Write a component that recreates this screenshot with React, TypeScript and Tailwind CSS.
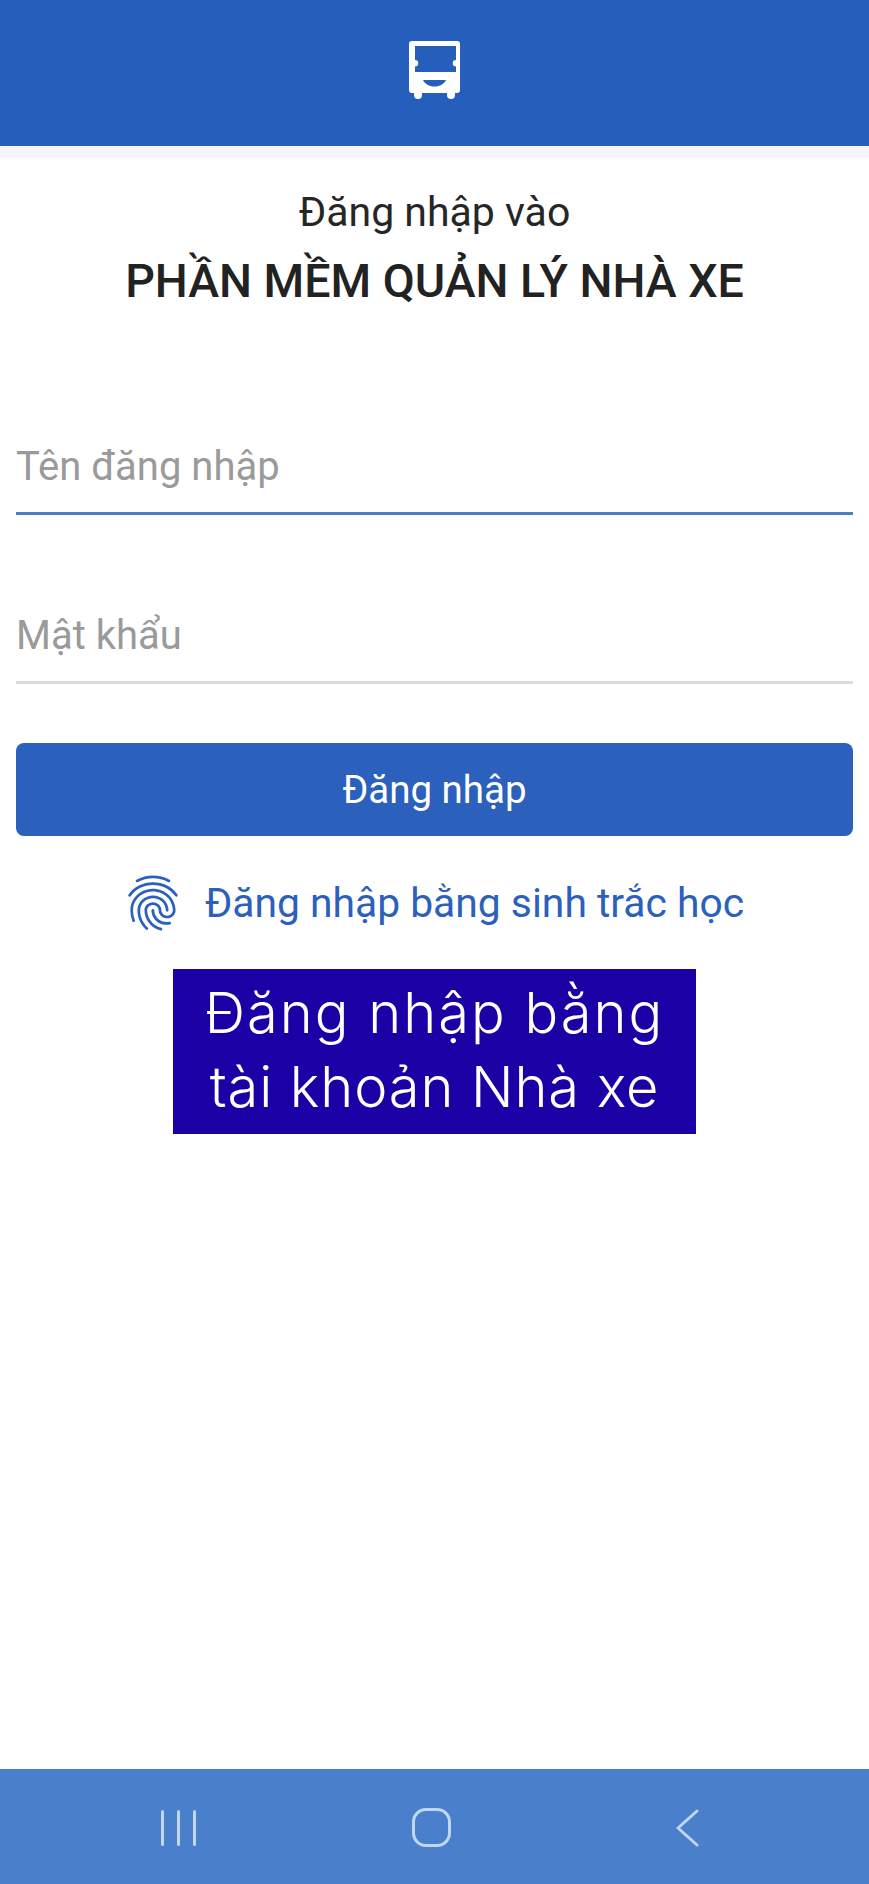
import { MdFingerprint } from 'react-icons/md'

const BusIcon = () => (
  <svg viewBox="0 0 51 58" className="w-[51px] h-[58px]" fill="#fff">
    <path
      fillRule="evenodd"
      d="M3 0h45a3 3 0 0 1 3 3v46a3 3 0 0 1-3 3H3a3 3 0 0 1-3-3V3a3 3 0 0 1 3-3zM6 5v14a3 3 0 0 1 0 6.5V31h41v-5.5a3 3 0 0 1 0-6.5V5z"
    />
    <path d="M5 50h8v4a4 4 0 0 1-8 0zM38 50h8v4a4 4 0 0 1-8 0z" />
    <path d="M14 39h23c-2 4-6 6.500-11.500 6.500S16 43 14 39z" fill="#265fbb" />
  </svg>
)

const NavBar = () => (
  <div className="h-[115px] bg-[#4a7fcc] flex items-center relative">
    <div className="absolute left-[161px] top-[41px] flex gap-[13px]">
      <div className="w-[3px] h-[36px] rounded-full bg-[#c3d6f0]" />
      <div className="w-[3px] h-[36px] rounded-full bg-[#c3d6f0]" />
      <div className="w-[3px] h-[36px] rounded-full bg-[#c3d6f0]" />
    </div>
    <div className="absolute left-[412px] top-[39px] w-[39px] h-[39px] rounded-[14px] border-[3px] border-[#c3d6f0]" />
    <svg viewBox="0 0 24 38" className="absolute left-[675px] top-[40px] w-[24px] h-[38px]" fill="none" stroke="#c3d6f0" strokeWidth="3" strokeLinecap="round" strokeLinejoin="round">
      <path d="M22 2 3 19l19 17" />
    </svg>
  </div>
)

export default function App() {
  return (
    <div className="w-[869px] h-[1884px] bg-white flex flex-col font-['Roboto',sans-serif]">
      <header className="h-[146px] bg-[#265fbb] flex justify-center pt-[41px] shrink-0">
        <BusIcon />
      </header>
      <div className="h-[12px] bg-[#f5f5f9] shrink-0" />

      <main className="flex-1 flex flex-col px-[16px]">
        <div className="text-center text-[41px] leading-[46px] text-[#262626] mt-[31px]">Đăng nhập vào</div>
        <div className="text-center text-[46.500px] leading-[52px] font-medium text-[#222222] mt-[20px]">PHẦN MỀM QUẢN LÝ NHÀ XE</div>

        <div className="mt-[137px] h-[71px] border-b-[3px] border-[#4a7cc7] flex items-start">
          <span className="text-[40px] leading-[46px] text-[#9a9a9a]">Tên đăng nhập</span>
        </div>
        <div className="mt-[98px] h-[71px] border-b-[3px] border-[#dcdcdc] flex items-start">
          <span className="text-[40px] leading-[46px] text-[#9a9a9a]">Mật khẩu</span>
        </div>

        <button className="mt-[59px] h-[93px] rounded-[8px] bg-[#2b60bc] text-white text-[38.500px] leading-[46px]">Đăng nhập</button>

        <div className="mt-[34px] h-[66px] pr-[5px] flex items-center justify-center gap-[19px] text-[#2b60bc] text-[40.800px] leading-[46px]">
          <MdFingerprint className="w-[66px] h-[66px]" />
          <span>Đăng nhập bằng sinh trắc học</span>
        </div>

        <div className="self-center mt-[33px] w-[523px] h-[165px] bg-[#1b00a6] text-white flex flex-col items-center justify-center pb-[4px] font-['Inter',sans-serif] font-light text-[56px] leading-[74px]">
          <div className="tracking-[2px]">Đăng nhập bằng</div>
          <div className="tracking-[0.900px]">tài khoản Nhà xe</div>
        </div>
      </main>

      <NavBar />
    </div>
  )
}
